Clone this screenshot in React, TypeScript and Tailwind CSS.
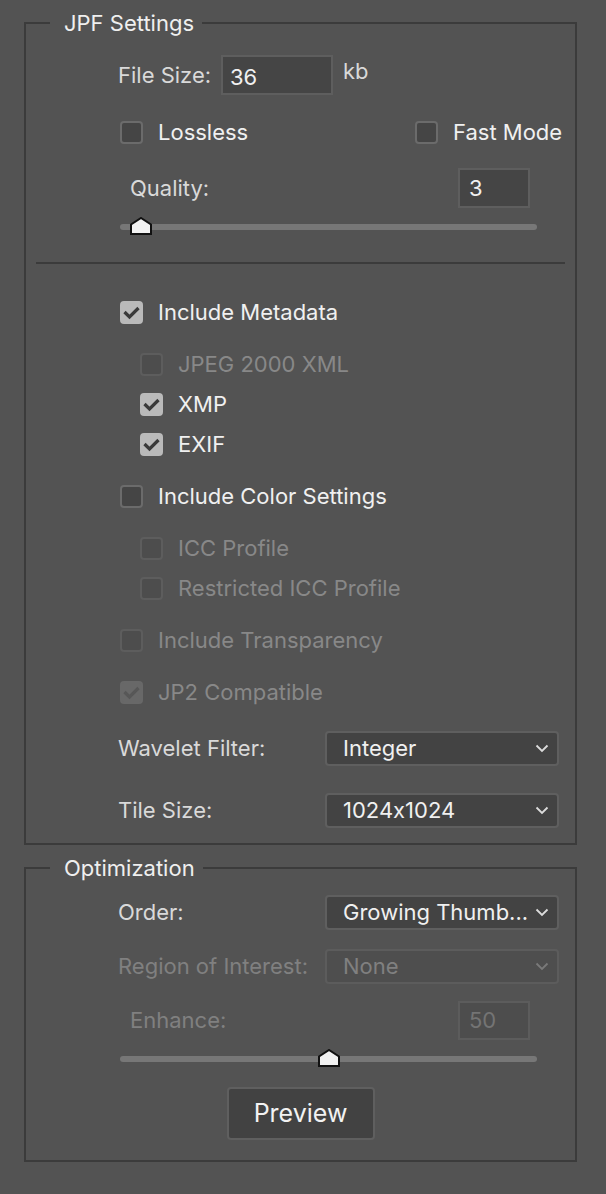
import clsx from 'clsx';

function Box({ checked, disabled }: { checked?: boolean; disabled?: boolean }) {
    return (
        <span
            className={clsx(
                'flex h-[23px] w-[23px] shrink-0 items-center justify-center rounded-[4px] border-2',
                checked
                    ? disabled
                        ? 'border-[#686868] bg-[#686868]'
                        : 'border-[#bababa] bg-[#bababa]'
                    : disabled
                      ? 'border-[#5d5d5d] bg-[#4d4d4d]'
                      : 'border-[#6b6b6b] bg-[#454545]'
            )}
        >
            {checked && (
                <svg viewBox="0 0 23 23" className="h-[23px] w-[23px] shrink-0">
                    <path
                        d="M4.5 11 L9.5 16 L18.5 7"
                        fill="none"
                        stroke={disabled ? '#575757' : '#3a3a3a'}
                        strokeWidth="3.2"
                        strokeLinejoin="miter"
                    />
                </svg>
            )}
        </span>
    );
}

function CheckRow({
    label,
    checked,
    disabled,
    sub,
    className,
}: {
    label: string;
    checked?: boolean;
    disabled?: boolean;
    sub?: boolean;
    className?: string;
}) {
    return (
        <div className={clsx('flex h-[40px] items-center', sub ? 'pl-[22px]' : 'pl-[2px]', className)}>
            <Box checked={checked} disabled={disabled} />
            <span className={clsx('ml-[15px] whitespace-nowrap text-[22px]', disabled ? 'text-[#888888]' : 'text-[#f0f0f0]')}>
                {label}
            </span>
        </div>
    );
}

function Chevron({ dim }: { dim?: boolean }) {
    return (
        <svg viewBox="0 0 14 9" className="h-[9px] w-[14px]">
            <path d="M1.5 1.5 L7 7 L12.5 1.5" fill="none" stroke={dim ? '#7a7a7a' : '#dcdcdc'} strokeWidth="1.8" />
        </svg>
    );
}

function Select({ value, disabled }: { value: string; disabled?: boolean }) {
    return (
        <div
            className={clsx(
                'flex h-[35px] w-[234px] shrink-0 items-center justify-between rounded-[4px] border-2 pl-[16px] pr-[8px] text-[22px]',
                disabled ? 'border-[#5c5c5c] bg-[#4e4e4e] text-[#808080]' : 'border-[#5f5f5f] bg-[#434343] text-[#f0f0f0]'
            )}
        >
            <span className="whitespace-nowrap">{value}</span>
            <Chevron dim={disabled} />
        </div>
    );
}

function Slider({ left }: { left: number }) {
    return (
        <div className="relative ml-[2px] flex h-[20px] w-[417px] items-center">
            <div className="h-[6px] w-full rounded-full bg-[#777777]" />
            {/* thumb */}
            <svg viewBox="0 0 22 18" className="absolute top-[0px] h-[18px] w-[22px]" style={{ left }}>
                <path d="M1 17 L1 7.5 L11 1 L21 7.5 L21 17 Z" fill="#f2f2f2" stroke="#111" strokeWidth="2" />
            </svg>
        </div>
    );
}

function Legend({ children }: { children: React.ReactNode }) {
    return (
        <legend className="ml-[24px] pl-[14px] pr-[8px] text-[22px] leading-[28px] text-[#efefef]">{children}</legend>
    );
}

export default function App() {
    return (
        <div className="min-h-[1194px] w-[606px] bg-[#535353] pt-[9px] font-['Inter',sans-serif] [font-feature-settings:'calt'_0]">
            {/* JPF Settings */}
            <fieldset className="ml-[24px] w-[553px] min-w-0 border-2 border-[#3b3b3b] pb-[13px]">
                <Legend>JPF Settings</Legend>
                <div className="pl-[92px] pr-[16px]">
                    <div className="mt-[18px] flex h-[40px] items-center">
                        <span className="w-[103px] text-[22px] text-[#d9d9d9]">File Size:</span>
                        <div className="flex h-[40px] w-[112px] items-center border-2 border-[#5e5e5e] bg-[#454545] pl-[7px] pt-[4px] text-[22px] text-[#f0f0f0]">
                            36
                        </div>
                        <span className="-mt-[8px] ml-[10px] text-[22px] text-[#d9d9d9]">kb</span>
                    </div>

                    <div className="mt-[17px] flex h-[40px] items-center">
                        <div className="w-[295px] shrink-0">
                            <CheckRow label="Lossless" />
                        </div>
                        <CheckRow label="Fast Mode" />
                    </div>

                    <div className="mt-[16px] flex h-[40px] items-center justify-between pl-[12px] pr-[29px]">
                        <span className="text-[22px] text-[#d9d9d9]">Quality:</span>
                        <div className="flex h-[40px] w-[72px] items-center border-2 border-[#5e5e5e] bg-[#454545] pl-[9px] text-[22px] text-[#f0f0f0]">
                            3
                        </div>
                    </div>

                    <div className="mt-[9px]">
                        <Slider left={10} />
                    </div>
                </div>

                <div className="mx-[10px] mt-[25px] h-[2px] bg-[#3b3b3b]" />

                <div className="pl-[92px] pr-[16px]">
                    <CheckRow label="Include Metadata" checked className="mt-[28px]" />
                    <CheckRow label="JPEG 2000 XML" sub disabled className="mt-[12px]" />
                    <CheckRow label="XMP" sub checked />
                    <CheckRow label="EXIF" sub checked />
                    <CheckRow label="Include Color Settings" className="mt-[12px]" />
                    <CheckRow label="ICC Profile" sub disabled className="mt-[12px]" />
                    <CheckRow label="Restricted ICC Profile" sub disabled />
                    <CheckRow label="Include Transparency" disabled className="mt-[12px]" />
                    <CheckRow label="JP2 Compatible" disabled checked className="mt-[12px]" />

                    <div className="mt-[16px] flex h-[40px] items-center justify-between">
                        <span className="text-[22px] text-[#d9d9d9]">Wavelet Filter:</span>
                        <Select value="Integer" />
                    </div>
                    <div className="mt-[22px] flex h-[40px] items-center justify-between">
                        <span className="text-[22px] text-[#d9d9d9]">Tile Size:</span>
                        <Select value="1024x1024" />
                    </div>
                </div>
            </fieldset>

            {/* Optimization */}
            <fieldset className="ml-[24px] mt-[9px] w-[553px] min-w-0 border-2 border-[#3b3b3b] pb-[20px]">
                <Legend>Optimization</Legend>
                <div className="pl-[92px] pr-[16px]">
                    <div className="mt-[10px] flex h-[40px] items-center justify-between">
                        <span className="text-[22px] text-[#d9d9d9]">Order:</span>
                        <Select value="Growing Thumb..." />
                    </div>
                    <div className="mt-[14px] flex h-[40px] items-center justify-between">
                        <span className="whitespace-nowrap text-[22px] text-[#808080]">Region of Interest:</span>
                        <Select value="None" disabled />
                    </div>
                    <div className="mt-[14px] flex h-[40px] items-center justify-between pl-[12px] pr-[29px]">
                        <span className="text-[22px] text-[#808080]">Enhance:</span>
                        <div className="flex h-[39px] w-[72px] items-center border-2 border-[#5c5c5c] bg-[#4d4d4d] pl-[9px] text-[22px] text-[#747474]">
                            50
                        </div>
                    </div>
                    <div className="mt-[9px]">
                        <Slider left={198} />
                    </div>
                </div>
                <div className="mt-[18px] flex justify-center">
                    <button className="h-[53px] w-[148px] rounded-[4px] border-2 border-[#5f5f5f] bg-[#424242] text-[25px] text-[#f2f2f2]">
                        Preview
                    </button>
                </div>
            </fieldset>
        </div>
    );
}
